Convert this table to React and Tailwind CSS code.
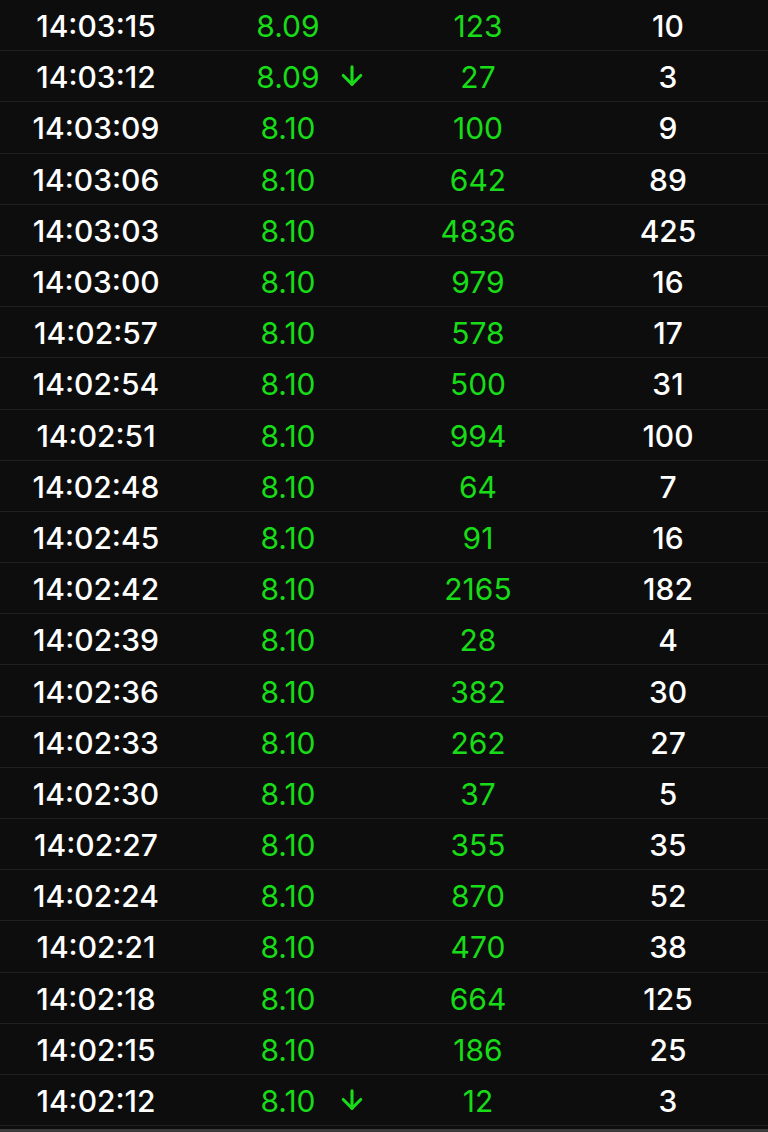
import { ArrowDown } from "lucide-react";

const rows = [
  ["14:03:15", "8.09", false, "123", "10"],
  ["14:03:12", "8.09", true, "27", "3"],
  ["14:03:09", "8.10", false, "100", "9"],
  ["14:03:06", "8.10", false, "642", "89"],
  ["14:03:03", "8.10", false, "4836", "425"],
  ["14:03:00", "8.10", false, "979", "16"],
  ["14:02:57", "8.10", false, "578", "17"],
  ["14:02:54", "8.10", false, "500", "31"],
  ["14:02:51", "8.10", false, "994", "100"],
  ["14:02:48", "8.10", false, "64", "7"],
  ["14:02:45", "8.10", false, "91", "16"],
  ["14:02:42", "8.10", false, "2165", "182"],
  ["14:02:39", "8.10", false, "28", "4"],
  ["14:02:36", "8.10", false, "382", "30"],
  ["14:02:33", "8.10", false, "262", "27"],
  ["14:02:30", "8.10", false, "37", "5"],
  ["14:02:27", "8.10", false, "355", "35"],
  ["14:02:24", "8.10", false, "870", "52"],
  ["14:02:21", "8.10", false, "470", "38"],
  ["14:02:18", "8.10", false, "664", "125"],
  ["14:02:15", "8.10", false, "186", "25"],
  ["14:02:12", "8.10", true, "12", "3"],
];

// Tick-by-tick trades list: time / price / volume / count
export default function App() {
  return (
    <div className="h-[1132px] w-[768px] overflow-hidden bg-[#0d0d0d] font-['Inter','Liberation_Sans',sans-serif] text-[30px]">
      {rows.map(([time, price, down, vol, count]) => (
        <div
          key={time}
          className="grid h-[51.2px] grid-cols-4 items-center border-b border-[#1f1f1f] pt-[2px] leading-none"
        >
          <span className="text-center font-medium text-white">{time}</span>
          <span className="relative text-center font-normal text-[#17dc17]">
            {price}
            {down && (
              <ArrowDown
                size={30}
                strokeWidth={2.5}
                className="absolute right-[17px] top-1/2 -translate-y-[55%]"
              />
            )}
          </span>
          <span className="-translate-x-[2px] text-center font-normal text-[#17dc17]">{vol}</span>
          <span className="pr-[8px] text-center font-medium text-white">{count}</span>
        </div>
      ))}
      <div className="mt-[3px] h-[3px] bg-[#3c3c3c]" />
    </div>
  );
}
